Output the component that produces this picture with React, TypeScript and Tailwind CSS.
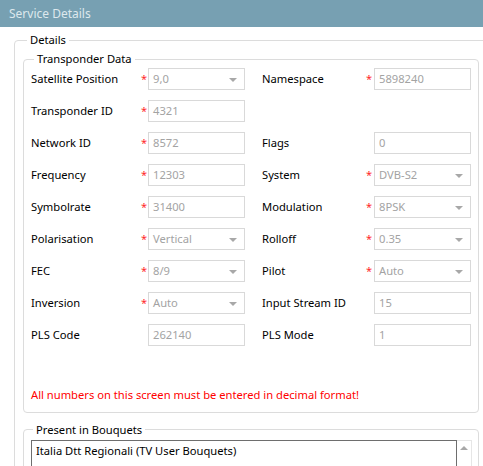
import React from 'react';

type Field = {
  label: string;
  value: string;
  required?: boolean;
  select?: boolean;
};

const rows: [Field, Field | null][] = [
  [{ label: 'Satellite Position', value: '9,0', required: true, select: true }, { label: 'Namespace', value: '5898240', required: true }],
  [{ label: 'Transponder ID', value: '4321', required: true }, null],
  [{ label: 'Network ID', value: '8572', required: true }, { label: 'Flags', value: '0' }],
  [{ label: 'Frequency', value: '12303', required: true }, { label: 'System', value: 'DVB-S2', required: true, select: true }],
  [{ label: 'Symbolrate', value: '31400', required: true }, { label: 'Modulation', value: '8PSK', required: true, select: true }],
  [{ label: 'Polarisation', value: 'Vertical', required: true, select: true }, { label: 'Rolloff', value: '0.35', required: true, select: true }],
  [{ label: 'FEC', value: '8/9', required: true, select: true }, { label: 'Pilot', value: 'Auto', required: true, select: true }],
  [{ label: 'Inversion', value: 'Auto', required: true, select: true }, { label: 'Input Stream ID', value: '15' }],
  [{ label: 'PLS Code', value: '262140' }, { label: 'PLS Mode', value: '1' }],
];

const Input: React.FC<{ field: Field }> = ({ field }) => (
  <div className="relative w-[97px] h-[22px] border border-[#d9d9d9] bg-white flex items-center pl-[4px] text-[#a3a3a3]">
    <span className="leading-none">{field.value}</span>
    {field.select && (
      <span className="absolute right-[7px] top-[9px] w-0 h-0 border-l-[4px] border-r-[4px] border-t-[4px] border-l-transparent border-r-transparent border-t-[#a8a8a8]" />
    )}
  </div>
);

const FieldCell: React.FC<{ field: Field | null; labelWidth: string; starWidth: string }> = ({ field, labelWidth, starWidth }) => {
  if (!field) return <div className="flex-1" />;
  return (
    <div className="flex items-center">
      <div className={`${labelWidth} text-black`}>{field.label}</div>
      <div className={`${starWidth} text-[#ff2a2a] text-[11px] leading-none pb-[2px]`}>{field.required ? '*' : ''}</div>
      <Input field={field} />
    </div>
  );
};

const App: React.FC = () => {
  return (
    <div
      className="w-[483px] h-[466px] overflow-hidden bg-white text-[11.2px] relative"
      style={{ fontFamily: '"Noto Sans", "Open Sans", sans-serif' }}
    >
      <div className="h-[27px] bg-[#77a0b2] text-[#dde8ed] text-[12px] flex items-center pl-[9px]">
        Service Details
      </div>

      <fieldset className="mt-[5px] ml-[14px] w-[500px] border border-[#dcdcdc] rounded-[4px] pl-[8px] pb-[10px]">
        <legend className="ml-[4px] px-[3px] text-black leading-[16px]">Details</legend>

        <fieldset className="mt-[3px] w-[456px] border border-[#dcdcdc] rounded-[4px] pl-[7px] pr-[6px] pb-[8px]">
          <legend className="ml-[3px] px-[3px] text-black leading-[16px]">Transponder Data</legend>
          <div className="flex flex-col gap-[10px] pt-[1px]">
            {rows.map(([left, right], i) => (
              <div key={i} className="flex items-center h-[22px]">
                <FieldCell field={left} labelWidth="w-[110px]" starWidth="w-[7px]" />
                <div className="w-[17px]" />
                <FieldCell field={right} labelWidth="w-[104px]" starWidth="w-[8px]" />
              </div>
            ))}
          </div>
          <div className="mt-[41px] text-[#ff0000]">All numbers on this screen must be entered in decimal format!</div>
        </fieldset>

        <fieldset className="mt-[9px] w-[455px] border border-[#dcdcdc] rounded-[4px] pl-[7px] pr-[6px] h-[60px]">
          <legend className="ml-[2px] px-[3px] text-black leading-[16px]">Present in Bouquets</legend>
          <div className="flex mt-[2px]">
            <div className="w-[426px] h-[40px] border border-[#6e6e6e] px-[4px] pt-[2px] text-black">
              Italia Dtt Regionali (TV User Bouquets)
            </div>
            <div className="w-[15px] h-[40px] border-t border-r border-[#e6e6e6] relative">
              <span className="absolute left-[3px] top-[5px] w-0 h-0 border-l-[4px] border-r-[4px] border-b-[4px] border-l-transparent border-r-transparent border-b-[#a8a8a8]" />
            </div>
          </div>
        </fieldset>
      </fieldset>
    </div>
  );
};

export default App;
